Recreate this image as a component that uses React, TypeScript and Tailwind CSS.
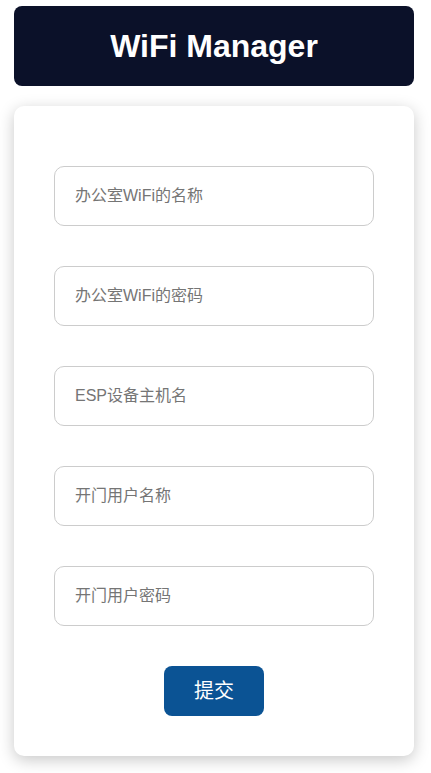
import React from "react";

const fields = [
  "办公室WiFi的名称",
  "办公室WiFi的密码",
  "ESP设备主机名",
  "开门用户名称",
  "开门用户密码",
];

export default function App() {
  return (
    <div
      className="min-h-[773px] w-[431px] bg-white pt-[6px] pl-[14px]"
      style={{ fontFamily: '"Liberation Sans", Arial, "Noto Sans CJK SC", sans-serif' }}
    >
      <div className="flex h-[80px] w-[400px] items-center justify-center rounded-[8px] bg-[#0b1129]">
        <h1 className="text-[32px] font-bold text-white">WiFi Manager</h1>
      </div>
      <div className="mt-[20px] flex w-[400px] flex-col items-center gap-[40px] rounded-[10px] bg-white px-[40px] pt-[60px] pb-[40px] shadow-[0_4px_16px_rgba(0,0,0,0.22)]">
        {fields.map((f) => (
          <input
            key={f}
            placeholder={f}
            className="h-[60px] w-[320px] rounded-[10px] border border-[#cccccc] px-[20px] text-[16px] text-[#333] outline-none placeholder:text-[#757575]"
          />
        ))}
        <button className="h-[50px] w-[100px] rounded-[8px] bg-[#0b5394] text-[20px] text-white">
          提交
        </button>
      </div>
    </div>
  );
}
